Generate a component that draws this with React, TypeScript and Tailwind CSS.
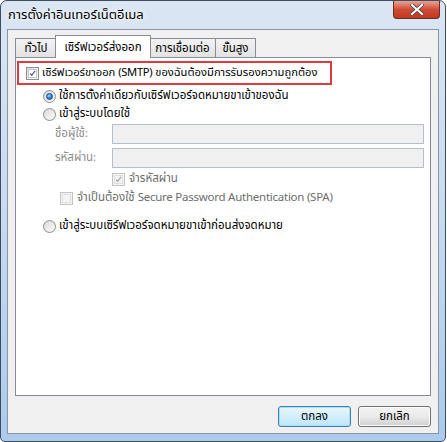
const font = "font-['Tahoma','Noto_Sans_Thai','Liberation_Sans',sans-serif]"

function CheckBox({ checked, disabled }: { checked?: boolean; disabled?: boolean }) {
  return (
    <span
      className={
        "flex h-[13px] w-[13px] shrink-0 items-center justify-center border " +
        (disabled ? "border-[#c4c4c4] bg-[#f4f4f4]" : "border-[#8e8f8f] bg-gradient-to-br from-[#dcdcdc] to-[#fbfbfb]")
      }
    >
      <span className={"flex h-[9px] w-[9px] items-center justify-center border " + (disabled ? "border-[#e0e0e0]" : "border-[#c9c9c9] bg-white")}>
        {checked && (
          <svg width="9" height="9" viewBox="0 0 9 9">
            <path
              d="M1.5 4.5 L3.6 6.8 L7.8 1.2"
              fill="none"
              stroke={disabled ? "#a8a8a8" : "#4a5f97"}
              strokeWidth="1.6"
            />
          </svg>
        )}
      </span>
    </span>
  )
}

function Radio({ checked }: { checked?: boolean }) {
  return (
    <span className="flex h-[13px] w-[13px] shrink-0 items-center justify-center rounded-full border border-[#8e8f8f] bg-gradient-to-br from-[#d8d8d8] to-[#fafafa]">
      {checked ? (
        <span className="h-[7px] w-[7px] rounded-full border border-[#1b4f8f] bg-[radial-gradient(circle_at_40%_35%,#a8d8ff,#2d7bd2_55%,#164f9c)]" />
      ) : (
        <span className="h-[9px] w-[9px] rounded-full bg-gradient-to-br from-[#dedede] to-[#f7f7f7]" />
      )}
    </span>
  )
}

export default function App() {
  return (
    <div className={"h-[442px] w-[447px] bg-white " + font}>
      <div className="flex h-[442px] w-[446px] flex-col rounded-t-[7px] rounded-b-[5px] border border-[#3e4c5e] bg-gradient-to-b from-[#dbe6f3] via-[#c6daf0] to-[#accaeb]">
        {/* Title bar */}
        <div className="flex h-[28px] shrink-0 items-start justify-between">
          <span className="pl-[7px] pt-[5px] text-[13px] text-black [text-shadow:0_0_6px_#ffffff,0_0_3px_#ffffff]">
            การตั้งค่าอินเทอร์เน็ตอีเมล
          </span>
          <div className="mr-[5px] flex h-[18px] w-[47px] items-center justify-center rounded-b-[4px] border border-t-0 border-[#6b2d25] bg-gradient-to-b from-[#e6a394] via-[#cf4a36] to-[#c0391f]">
            <svg width="14" height="11" viewBox="0 0 14 11">
              <path d="M2 1 L12 10 M12 1 L2 10" stroke="#3b3b3b" strokeWidth="3.6" strokeLinecap="square" />
              <path d="M2 1 L12 10 M12 1 L2 10" stroke="#ffffff" strokeWidth="2.2" strokeLinecap="square" />
            </svg>
          </div>
        </div>

        {/* Client area */}
        <div className="mx-[6px] flex h-[405px] flex-col border border-[#8795a8] bg-[#f0f0f0] px-[7px] text-[11.5px]">
          {/* Tabs */}
          <div className="flex h-[27px] items-end pt-[4px]">
            <div className="flex h-[19px] w-[42px] justify-center border border-b-0 border-[#898c95] bg-gradient-to-b from-[#f2f2f2] to-[#e3e3e3] pt-[1px] text-black">
              ทั่วไป
            </div>
            <div className="relative z-10 -mx-[2px] -mb-px flex h-[23px] w-[96px] justify-center border border-b-0 border-[#898c95] bg-white pt-[3px] text-black">
              เซิร์ฟเวอร์ส่งออก
            </div>
            <div className="flex h-[19px] w-[67px] justify-center border border-b-0 border-[#898c95] bg-gradient-to-b from-[#f2f2f2] to-[#e3e3e3] pt-[1px] text-black">
              การเชื่อมต่อ
            </div>
            <div className="-ml-px flex h-[19px] w-[41px] justify-center border border-b-0 border-[#898c95] bg-gradient-to-b from-[#f2f2f2] to-[#e3e3e3] pt-[1px] text-black">
              ขั้นสูง
            </div>
          </div>

          {/* Panel */}
          <div className="flex h-[339px] w-[416px] flex-col border border-[#898c95] bg-white pt-[3px] text-black">
            <div className="ml-px flex h-[24px] w-[315px] items-center gap-[3px] border-2 border-[#e0393e] pl-[7px] text-[11.2px]">
              <CheckBox checked />
              <span>
                เซิร์ฟเวอร์ขาออก <span className="tracking-[-0.3px]">(SMTP)</span> ของฉันต้องมีการรับรองความถูกต้อง
              </span>
            </div>

            <div className="ml-[27px] mt-[4px] flex h-[14px] items-center gap-[3px]">
              <Radio checked />
              <span>ใช้การตั้งค่าเดียวกับเซิร์ฟเวอร์จดหมายขาเข้าของฉัน</span>
            </div>

            <div className="ml-[27px] mt-[4px] flex h-[14px] items-center gap-[3px]">
              <Radio />
              <span>เข้าสู่ระบบโดยใช้</span>
            </div>

            <div className="mt-[3px] flex flex-col gap-[4px] pr-[6px]">
              <div className="flex items-center">
                <span className="w-[96px] pl-[39px] text-[#8d8d8d]">ชื่อผู้ใช้:</span>
                <div className="h-[20px] flex-1 border border-[#b4bfcc] bg-[#f0f0f0]" />
              </div>
              <div className="flex items-center">
                <span className="w-[96px] pl-[39px] text-[#8d8d8d]">รหัสผ่าน:</span>
                <div className="h-[20px] flex-1 border border-[#b4bfcc] bg-[#f0f0f0]" />
              </div>
            </div>

            <div className="ml-[96px] mt-[4px] flex h-[14px] items-center gap-[4px] text-[#6d6d6d]">
              <CheckBox checked disabled />
              <span>จำรหัสผ่าน</span>
            </div>

            <div className="ml-[44px] mt-[5px] flex h-[14px] items-center gap-[4px] text-[#6d6d6d]">
              <CheckBox disabled />
              <span>
                จำเป็นต้องใช้ <span className="tracking-[-0.25px]">Secure Password Authentication (SPA)</span>
              </span>
            </div>

            <div className="ml-[27px] mt-[14px] flex h-[14px] items-center gap-[3px]">
              <Radio />
              <span>เข้าสู่ระบบเซิร์ฟเวอร์จดหมายขาเข้าก่อนส่งจดหมาย</span>
            </div>
          </div>

          {/* Buttons */}
          <div className="mt-[10px] flex w-[416px] justify-end gap-[7px] text-black">
            <button className="flex h-[21px] w-[73px] items-center justify-center rounded-[3px] border border-[#3c7fb1] bg-gradient-to-b from-[#eaf6fd] to-[#bee6fd] shadow-[inset_0_0_0_1px_#a7e0fb]">
              ตกลง
            </button>
            <button className="flex h-[21px] w-[73px] items-center justify-center rounded-[3px] border border-[#707070] bg-gradient-to-b from-[#f2f2f2] via-[#ebebeb] to-[#cfcfcf] shadow-[inset_0_0_0_1px_#fcfcfc]">
              ยกเลิก
            </button>
          </div>
        </div>
      </div>
    </div>
  )
}
